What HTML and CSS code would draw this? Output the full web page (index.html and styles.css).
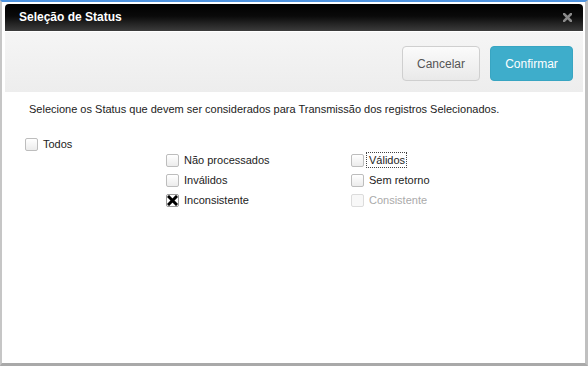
FILE: index.html
```html
<!DOCTYPE html>
<html>
<head>
<meta charset="utf-8">
<link rel="stylesheet" href="styles.css">
</head>
<body>
<div class="frame">
  <div class="header">
    <span class="title">Seleção de Status</span>
    <svg class="close" width="9" height="9" viewBox="0 0 9 9"><path d="M1 1L8 8M8 1L1 8" stroke="#8a8a8a" stroke-width="2.6" stroke-linecap="square"/></svg>
  </div>
  <div class="toolbar">
    <button class="btn btn-cancel">Cancelar</button>
    <button class="btn btn-confirm">Confirmar</button>
  </div>
  <div class="content">
    <p class="desc">Selecione os Status que devem ser considerados para Transmissão dos registros Selecionados.</p>
    <label class="item todos"><span class="box"></span><span class="lbl">Todos</span></label>
    <div class="grid">
      <label class="item"><span class="box"></span><span class="lbl">Não processados</span></label>
      <label class="item"><span class="box"></span><span class="lbl focus">Válidos</span></label>
      <label class="item"><span class="box"></span><span class="lbl">Inválidos</span></label>
      <label class="item"><span class="box"></span><span class="lbl">Sem retorno</span></label>
      <label class="item"><span class="box checked"><svg width="11" height="11" viewBox="0 0 11 11"><path d="M2 2L9 9M9 2L2 9" stroke="#000" stroke-width="3" stroke-linecap="square"/></svg></span><span class="lbl">Inconsistente</span></label>
      <label class="item disabled"><span class="box"></span><span class="lbl">Consistente</span></label>
    </div>
  </div>
</div>
</body>
</html>
```
FILE: styles.css
```css
html, body {
  margin: 0;
  padding: 0;
}
body {
  width: 588px;
  height: 366px;
  font-family: "Liberation Sans", Arial, sans-serif;
  background: #fff;
}
.frame {
  box-sizing: border-box;
  width: 588px;
  height: 366px;
  border-top: 2px solid #4f93de;
  border-left: 2px solid #c6c6c6;
  border-right: 3px solid #c0c0c0;
  border-bottom: 3px solid #a9a9a9;
  padding: 2px 2px 0 3px;
  background: #fff;
  display: flex;
  flex-direction: column;
}
.header {
  height: 27px;
  border-radius: 4px 4px 0 0;
  background: linear-gradient(to bottom, #000 0%, #0a0a0a 45%, #3c3c3c 100%);
  display: flex;
  align-items: center;
  justify-content: space-between;
  padding: 0 11px 0 14px;
}
.title {
  color: #fff;
  font-weight: bold;
  font-size: 12px;
  margin-top: -1px;
}
.close {
  display: block;
  margin-top: -1px;
}
.toolbar {
  height: 60px;
  box-sizing: border-box;
  padding: 14px 10px 11px 0;
  background: linear-gradient(to bottom, #f5f5f5, #ededed);
  display: flex;
  justify-content: flex-end;
  gap: 10px;
  margin-top: 1px;
}
.btn {
  height: 35px;
  border-radius: 4px;
  font-family: "Liberation Sans", Arial, sans-serif;
  font-size: 12px;
  padding: 0;
}
.btn-cancel {
  width: 78px;
  border: 1px solid #cfcfcf;
  background: linear-gradient(to bottom, #fbfbfb, #e9e9e9);
  color: #555;
}
.btn-confirm {
  width: 83px;
  border: 1px solid #38a5c2;
  background: #3eadcb;
  color: #fff;
}
.content {
  flex: 1;
  font-size: 11px;
  color: #222;
}
.desc {
  margin: 10px 0 0 24px;
  line-height: 14px;
}
.item {
  display: flex;
  align-items: center;
  height: 20px;
  color: #222;
}
.todos {
  margin: 18px 0 0 20px;
  width: 60px;
}
.grid {
  display: grid;
  grid-template-columns: 185px 185px;
  margin: -4px 0 0 161px;
}
.box {
  box-sizing: border-box;
  width: 13px;
  height: 13px;
  border: 1px solid #bdbdbd;
  border-radius: 2px;
  background: linear-gradient(to bottom, #ffffff, #ececec);
  display: flex;
  align-items: center;
  justify-content: center;
  flex: none;
}
.box.checked {
  border-color: #999;
  background: #fff;
}
.lbl {
  margin-left: 5px;
}
.focus {
  outline: 1px dotted #444;
  outline-offset: 1px;
  margin-left: 4px;
  padding-left: 1px;
}
.disabled .box {
  border-color: #dcdcdc;
  background: #f8f8f8;
}
.disabled .lbl {
  color: #aaa;
}
```
